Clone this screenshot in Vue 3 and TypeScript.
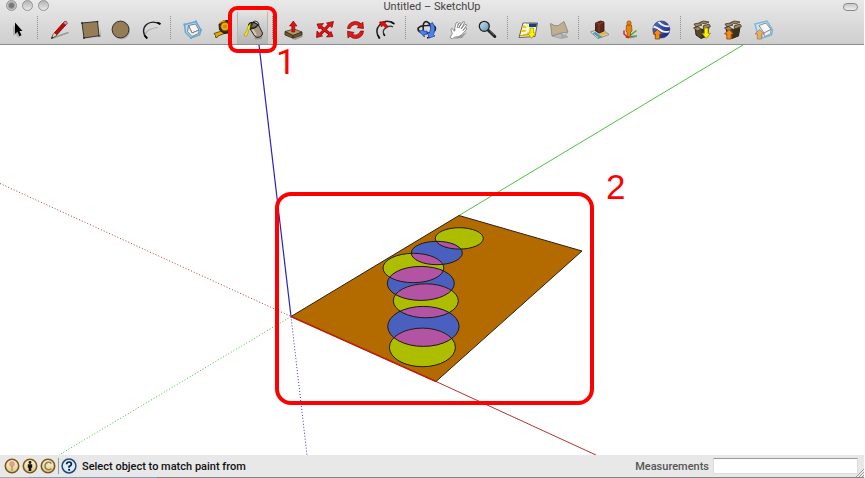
<script setup lang="ts">
import { ref } from 'vue'

interface Tool {
  id: string
  label: string
}

interface Disc {
  cx: number
  cy: number
  rx: number
  ry: number
  fill: string
}

const groups: Tool[][] = [
  [{ id: 'select', label: 'Select' }],
  [
    { id: 'line', label: 'Line' },
    { id: 'rectangle', label: 'Rectangle' },
    { id: 'circle', label: 'Circle' },
    { id: 'arc', label: 'Arc' },
  ],
  [
    { id: 'component', label: 'Make Component' },
    { id: 'tape', label: 'Tape Measure' },
    { id: 'paint', label: 'Paint Bucket' },
  ],
  [
    { id: 'pushpull', label: 'Push/Pull' },
    { id: 'move', label: 'Move' },
    { id: 'rotate', label: 'Rotate' },
    { id: 'offset', label: 'Offset' },
  ],
  [
    { id: 'orbit', label: 'Orbit' },
    { id: 'pan', label: 'Pan' },
    { id: 'zoom', label: 'Zoom' },
  ],
  [
    { id: 'view', label: 'Get Current View' },
    { id: 'terrain', label: 'Toggle Terrain' },
  ],
  [
    { id: 'place', label: 'Add New Building' },
    { id: 'person', label: 'Photo Textures' },
    { id: 'earth', label: 'Preview in Google Earth' },
  ],
  [
    { id: 'getmodels', label: 'Get Models' },
    { id: 'sharemodel', label: 'Share Model' },
    { id: 'sharecomponent', label: 'Share Component' },
  ],
]

const activeTool = ref('paint')
const measurement = ref('')

const lime = '#adbd00'
const blue = '#4a60bf'

const discs: Disc[] = [
  { cx: 459.3, cy: 238.4, rx: 24, ry: 10.7, fill: lime },
  { cx: 436.8, cy: 253, rx: 25.5, ry: 11.7, fill: blue },
  { cx: 413.4, cy: 268, rx: 30.4, ry: 14.7, fill: lime },
  { cx: 420.8, cy: 283.4, rx: 33.5, ry: 17, fill: blue },
  { cx: 425.8, cy: 300.8, rx: 32.5, ry: 17, fill: lime },
  { cx: 423.4, cy: 326.4, rx: 35.7, ry: 20, fill: blue },
  { cx: 422.4, cy: 347.4, rx: 33, ry: 19.3, fill: lime },
]
</script>

<template>
  <!-- Shared icon symbols -->
  <svg class="sprite" aria-hidden="true">
    <defs>
      <linearGradient id="g-lens" x1="0" y1="0" x2="1" y2="1">
        <stop offset="0" stop-color="#cfe6f2" />
        <stop offset="1" stop-color="#5a92b8" />
      </linearGradient>
      <linearGradient id="g-globe" x1="0" y1="0" x2="1" y2="1">
        <stop offset="0" stop-color="#5a74c8" />
        <stop offset="1" stop-color="#101c78" />
      </linearGradient>
      <linearGradient id="g-gold" x1="0" y1="0" x2="0" y2="1">
        <stop offset="0" stop-color="#fdf6d8" />
        <stop offset="1" stop-color="#dfcb88" />
      </linearGradient>

      <symbol id="i-select" viewBox="0 0 24 24">
        <path d="M7 7v11l3-2 2 4 2-1-2-4h2z" fill="#999" opacity=".6" />
        <path d="M9 4.500v11.500l2.400-2.300 2 4.600 2.100-1-2-4.300h3z" fill="#000" />
      </symbol>

      <symbol id="i-line" viewBox="0 0 24 24">
        <path d="M7 20l15.500-5.500" stroke="#999" stroke-width="1.500" fill="none" />
        <path d="M5.500 20.500l1.500-4L18.500 3.500l2.500 2L10 18z" fill="#e8d9a0" stroke="#333" stroke-width=".7" />
        <path d="M8.500 14.700L17.300 5l2.300 1.900-9 9.700z" fill="#d80000" stroke="#600" stroke-width=".7" />
        <path d="M17.300 5l1.500-1.700q2.300-.4 2.500 1.900l-1.500 1.700z" fill="#d89aac" stroke="#924" stroke-width=".7" />
        <path d="M5.200 20.800l.7-2.300 1.600 1.500z" fill="#111" />
      </symbol>

      <symbol id="i-rectangle" viewBox="0 0 24 24">
        <path d="M9 21.500l14-2.500V9l1 10z" fill="#aaa" />
        <path d="M5 5l15.500-1.500 1.500 14.300L7 20z" fill="#967d55" stroke="#333" stroke-width="1" />
        <g fill="#222"><circle cx="5" cy="5" r=".9" /><circle cx="20.500" cy="3.600" r=".9" /><circle cx="22" cy="17.800" r=".9" /><circle cx="7" cy="20" r=".9" /></g>
      </symbol>

      <symbol id="i-circle" viewBox="0 0 24 24">
        <circle cx="13.300" cy="12.500" r="8.700" fill="#aaa" />
        <circle cx="12.500" cy="11.500" r="8.400" fill="#967d55" stroke="#333" stroke-width="1" />
      </symbol>

      <symbol id="i-arc" viewBox="0 0 24 24" fill="none">
        <path d="M6 17Q7.500 10.500 19 9.500" stroke="#aaa" stroke-width="1.200" />
        <path d="M8 20.300C3.500 16.500 3.500 10 7.500 6.500Q13 2 21 6" stroke="#222" stroke-width="1.400" />
        <path d="M8.300 20.500l-2.600-3M18.500 4.500L21.500 6.200" stroke="#000" stroke-width="1.900" />
      </symbol>

      <symbol id="i-component" viewBox="0 0 24 24">
        <path d="M5.500 6.500L17 3.500l5 8.500-1.500 5-8.500 3-5.500-5.500z" fill="#bcd9ec" stroke="#62a9dd" stroke-width="1.500" />
        <path d="M9.500 7.500L16.500 6l3.500 6-7 3z" fill="#f6f6f6" stroke="#777" stroke-width=".9" />
        <path d="M13 15l7-3-.4 3.500-6.600 3-4.500-5 1-6z" fill="#eee" stroke="#777" stroke-width=".9" />
        <g fill="#62a9dd"><rect x="4.500" y="5.500" width="2" height="2" /><rect x="16" y="2.500" width="2" height="2" /><rect x="11" y="19" width="2" height="2" /><rect x="21" y="11" width="2" height="2" /></g>
      </symbol>

      <symbol id="i-tape" viewBox="0 0 24 24">
        <path d="M4 15.500l9-3 4 2-9 3.500-.8 1.500-1.800-.2.300-1.600z" fill="#e9a800" stroke="#4a3500" stroke-width=".8" />
        <path d="M9 6.500Q10 3 15 2.500h4.500l2 3v7L19 15l-5 .5L9.500 12z" fill="#2c2a26" stroke="#111" stroke-width=".8" />
        <path d="M9.500 5.500Q11 3 15.500 2.800" fill="none" stroke="#f0b000" stroke-width="1.200" />
        <circle cx="15" cy="8.500" r="4.200" fill="#f5ae00" stroke="#7a5500" stroke-width=".8" />
        <circle cx="15" cy="8.500" r="2" fill="#d8870c" />
      </symbol>

      <symbol id="i-paint" viewBox="0 0 24 24">
        <path d="M13 20l8-2 1.500-4-2 7-6 .5z" fill="#777" opacity=".6" />
        <path d="M8.800 10.500L17.500 7l4 8q.5 2.500-3 4-3 1-4.500-.5z" fill="#a89980" stroke="#222" stroke-width="1" />
        <path d="M11.500 11.500l3.500 5.500" stroke="#d6cbb5" stroke-width="2" />
        <path d="M8.800 10.800Q6 6 9.500 4.500t8 2.500q-3 4-8.700 3.800z" fill="#3c3a28" stroke="#111" stroke-width="1" />
        <path d="M12 5.500q3-.5 4 1.500-2 2-5 2z" fill="#77735a" />
        <path d="M9.500 5.500Q6 8 5.800 12.500L3 17q.5 2 2.800 1 1.700-3 1.600-5L10 8.500z" fill="#f2e21a" stroke="#8a8000" stroke-width=".5" />
        <path d="M9.500 11Q9.500 4 14 3q3.500 0 4 4" fill="none" stroke="#222" stroke-width=".9" />
      </symbol>

      <symbol id="i-pushpull" viewBox="0 0 24 24">
        <path d="M12 21l9.500-4v2L14 22z" fill="#999" />
        <path d="M4 13.500L13 11l8 3-9 3.500z" fill="#b39a6c" stroke="#443a22" stroke-width=".8" />
        <path d="M4 13.500v3.500l8 3.200v-2.700zM12 17.500v2.700l9-3.200V14z" fill="#705a32" stroke="#332811" stroke-width=".8" />
        <path d="M12.300 3l3.700 5h-2.200v6h-3V8H8.500z" fill="#e01010" stroke="#800" stroke-width=".6" />
      </symbol>

      <symbol id="i-move" viewBox="0 0 24 24">
        <path d="M7.500 8l10.500 8M18 6L7.500 17" stroke="#8a0000" stroke-width="3" />
        <g fill="#e01414" stroke="#8a0000" stroke-width=".7">
          <path d="M21.500 3.500l-1.500 6-5.500-4.500z" />
          <path d="M5 6l6.500-.5-4.500 5.500z" />
          <path d="M4.500 19.500l.5-6.500 5.500 5z" />
          <path d="M21 18.500l-6.500.5 4.500-5.500z" />
        </g>
        <path d="M8 8.300l10 7.500M17.700 6.500L7.500 16.700" stroke="#e01414" stroke-width="1.800" />
      </symbol>

      <symbol id="i-rotate" viewBox="0 0 24 24">
        <path d="M4.500 10.500Q5 4.500 12 3.500q4 0 6 2.300l1.800-1.800.7 6.500-6.300-.8 1.800-2Q12 5 8.500 8l-1.300 2.500z" fill="#dc1c1c" stroke="#8a0000" stroke-width=".7" />
        <path d="M20.500 13Q20 19.500 13 20.500q-4 0-6-2.300L5 20l-.5-6.800 6.500 1.300-1.800 1.900q4 2 7-1l1.300-2.400z" fill="#dc1c1c" stroke="#8a0000" stroke-width=".7" />
      </symbol>

      <symbol id="i-offset" viewBox="0 0 24 24" fill="none">
        <path d="M5.500 20.500Q0 12.500 6 6.500T19.500 5.500" stroke="#222" stroke-width="1.500" />
        <path d="M10.500 17.500Q7.500 13 11.500 10t7.500-1" stroke="#333" stroke-width="1.200" />
        <path d="M4 17l1.700 3.500M17 3.800l3.500 2.200M9.500 15.500l1.300 2.500" stroke="#111" stroke-width="1.600" />
        <path d="M5.500 4l6.500-.5-1 1.800 3 3-2 2-3.200-3.200L7.500 9z" fill="#e01010" stroke="#900" stroke-width=".7" />
      </symbol>

      <symbol id="i-orbit" viewBox="0 0 24 24">
        <path d="M13 7.500q8.500-1 8.500 3t-9 5Q3.500 14.500 4 10.500 5.500 7.500 13 7.500z" fill="none" stroke="#222" stroke-width="1.700" />
        <path d="M9.500 13Q8 3.500 12.500 3.500q5 2 5 9t-4.500 7.500" fill="none" stroke="#222" stroke-width="1.600" />
        <path d="M16 6l2.500-1.500q4 5.500 1 12l1.500 1.500-6 2-1.500-6 2 .8Q17.500 11 16 6z" fill="#4a82ee" stroke="#173a99" stroke-width=".7" />
        <path d="M5 13.500l4.500-2 .3 2 3.200-.5v3l-3 .5.500 2.500z" fill="#4a82ee" stroke="#173a99" stroke-width=".7" />
      </symbol>

      <symbol id="i-pan" viewBox="0 0 24 24">
        <path d="M8 21l9-4 5-3-5 6z" fill="#999" />
        <path d="M5 19.500l2.300-4-1.400-4.300q.8-1.600 2.300.2l1.100 1.900L14 5.500q1.800-1.600 2 0l-2.300 4.500L17.800 4q2-1 1.700.8L16 11l4-4.500q1.700-.8 1.600 1L17.800 12.500l2.700-2.500q1.600-.4 1.200 1.200L16.500 17q-3 2.500-7 2L7.500 21z" fill="#fff" stroke="#666" stroke-width=".7" />
        <path d="M9.300 12.500L11 5q1.500-1.600 2.300.2l-1.100 5" fill="#fff" stroke="#666" stroke-width=".7" />
      </symbol>

      <symbol id="i-zoom" viewBox="0 0 24 24">
        <path d="M12.500 12.500l6.300 6" stroke="#222" stroke-width="3" stroke-linecap="round" />
        <path d="M13.500 12.800l4.500 4.300" stroke="#777" stroke-width=".8" />
        <circle cx="8.300" cy="8.300" r="5" fill="url(#g-lens)" stroke="#222" stroke-width="1.300" />
      </symbol>

      <symbol id="i-view" viewBox="0 0 24 24">
        <path d="M7 5h14.500l-2.500 13.500L3 19.500z" fill="#fbf5c0" stroke="#555" stroke-width=".9" />
        <path d="M13 5.500h8L20.200 9H13z" fill="#173d83" />
        <path d="M7 7.500h4.500v2.500h-5zM5.500 12h5v2H5z" fill="#f2c800" />
        <path d="M4 17.500l9-1" stroke="#d9a600" stroke-width="1.500" />
        <path d="M8.500 5.500l3.500 5-1 3-6 3" stroke="#fff" stroke-width="1.300" fill="none" />
        <path d="M14 10h3.500v5H20l-4.500 5.300L11.500 15H14z" fill="#fff500" stroke="#9b9200" stroke-width=".7" />
      </symbol>

      <symbol id="i-terrain" viewBox="0 0 24 24">
        <path d="M5 18l8-3 8 4-7 1.500z" fill="#b9b9b9" stroke="#999" stroke-width=".7" />
        <path d="M3.500 5.500q5 3.500 8 2l5.500-4 4 10.500-7 1-9 3z" fill="#c0ae91" stroke="#8f877b" stroke-width=".9" />
        <path d="M14 15.500l2 4.500 5-6" fill="none" stroke="#999" stroke-width=".9" />
      </symbol>

      <symbol id="i-place" viewBox="0 0 24 24">
        <path d="M3.500 14L14 10.500l8 6-11 4z" fill="#e8e3ce" stroke="#777" stroke-width=".8" />
        <path d="M5.500 15l3-1 5.500 4-3 1z" fill="#3e9bd0" />
        <path d="M14 18l-4-3.500 7-2 3.500 3.500z" fill="#dfb75a" />
        <path d="M11 19l3-1 1.500.8-4 1.500z" fill="#43a045" />
        <path d="M8.500 5l5-2 3.500 1v9L12 15l-3.500-2z" fill="#60261c" stroke="#301008" stroke-width=".8" />
        <path d="M12 6v8.500M8.500 5l3.500 1 5-2" stroke="#8d473a" stroke-width=".8" fill="none" />
      </symbol>

      <symbol id="i-person" viewBox="0 0 24 24">
        <path d="M10 19l8.500-6.500M8 19l11-1" stroke="#3aa545" stroke-width="1.300" fill="none" />
        <path d="M12 20l6-1.500" stroke="#888" stroke-width="1.200" />
        <path d="M9.500 19L6 16V12.500" stroke="#c22" stroke-width="1.400" fill="none" />
        <path d="M8.500 7h5l.5 6-1.300 1-.5 5H9.500L9 14l-1-1z" fill="#e98211" stroke="#9e4b00" stroke-width=".8" />
        <circle cx="11" cy="5" r="2.100" fill="#e98211" stroke="#9e4b00" stroke-width=".8" />
        <path d="M8 18l4 1-1.500 1.500-3-1z" fill="#cc2a17" />
      </symbol>

      <symbol id="i-earth" viewBox="0 0 24 24">
        <circle cx="12.300" cy="11.500" r="8.500" fill="url(#g-globe)" stroke="#162468" stroke-width=".6" />
        <path d="M5 7.500Q9 9 12.500 11.500t8 1l-.3 1.800Q14 16 10 12.500T4 10zM8.500 4.200q3 3.300 6 4.300t6 .5l-.5-1.500Q15 8 10.500 3.500z" fill="#edf3ff" />
        <path d="M8.500 11.500L13 16h-2.300v5H6.300v-5H4z" fill="#f18a18" stroke="#874400" stroke-width=".8" />
      </symbol>

      <symbol id="i-carton" viewBox="0 0 24 24">
        <path d="M6 9l7 2.500L20 9l-1.500 9L12 20.500 7 17z" fill="#59472f" stroke="#29200f" stroke-width=".9" />
        <path d="M12.500 11.500v9l6-2.500L20 9z" fill="#393020" />
        <path d="M5 6l5-1 3 2-6 2zM10.500 4.500l4-1.500 5.500 1-4 2zM14 8l6-2 1.500 2.500L15 11zM4.500 10l4-1.500 4 2.500-4 2z" fill="#9d8866" stroke="#44351f" stroke-width=".8" />
      </symbol>

      <symbol id="i-getmodels" viewBox="0 0 24 24">
        <use href="#i-carton" width="24" height="24" />
        <path d="M15.300 10h3.800v5.300h2.400l-4.300 5.200-4.200-5.200h2.300z" fill="#fff300" stroke="#968b00" stroke-width=".8" />
      </symbol>

      <symbol id="i-sharemodel" viewBox="0 0 24 24">
        <use href="#i-carton" width="24" height="24" />
        <path d="M9 11.500l4.500 4.500h-2.300v5H6.800v-5H4.500z" fill="#f58c16" stroke="#894400" stroke-width=".8" />
      </symbol>

      <symbol id="i-sharecomponent" viewBox="0 0 24 24">
        <path d="M4 6l12-3 5.500 9-1 5-8.500 3-6-6z" fill="#cfe3f0" stroke="#79b9e3" stroke-width="1.500" />
        <path d="M8 7.500l7-2.500 5 6.500-7 3.500z" fill="#f9f9f9" stroke="#777" stroke-width=".8" />
        <path d="M13 15l7-3.500-.5 4.500-6 2.500z" fill="#eee" stroke="#888" stroke-width=".8" />
        <path d="M8.500 11.500L13 16h-2.300v5H6.300v-5H4z" fill="#e5ad69" stroke="#a4733b" stroke-width=".7" />
      </symbol>
    </defs>
  </svg>

  <div class="window">
    <header class="chrome">
      <div class="titlebar">
        <div class="lights">
          <button class="light close" type="button" aria-label="Close"></button>
          <button class="light" type="button" aria-label="Minimize"></button>
          <button class="light" type="button" aria-label="Zoom window"></button>
        </div>
        <h1 class="title">Untitled – SketchUp</h1>
        <button class="pill" type="button" aria-label="Toggle toolbar"></button>
      </div>
      <nav class="toolbar" aria-label="Tools">
        <div v-for="(group, g) in groups" :key="g" class="group">
          <div v-for="tool in group" :key="tool.id" class="slot">
            <button
              type="button"
              class="tool"
              :class="{ active: tool.id === activeTool }"
              :aria-label="tool.label"
              :aria-pressed="tool.id === activeTool"
              @click="activeTool = tool.id"
            >
              <svg class="icon" aria-hidden="true"><use :href="'#i-' + tool.id" /></svg>
            </button>
            <div v-if="tool.id === 'paint'" class="callout">
              <span class="callout-number">1</span>
            </div>
          </div>
        </div>
      </nav>
    </header>

    <main class="viewport">
      <svg class="scene" viewBox="0 45 864 410" preserveAspectRatio="xMidYMid slice" role="img" aria-label="Model">
        <defs>
          <clipPath v-for="(d, i) in discs" :id="'disc-' + i" :key="i">
            <ellipse :cx="d.cx" :cy="d.cy" :rx="d.rx" :ry="d.ry" />
          </clipPath>
        </defs>

        <g fill="none" stroke-width="1">
          <path d="M0 183.500L291 316.500" stroke="#b83c3c" stroke-dasharray="1 2" />
          <path d="M291 316.500L59 455" stroke="#46c034" stroke-dasharray="1 2" />
          <path d="M291 316.500L307 455" stroke="#3434d0" stroke-dasharray="1 2" />
          <path d="M459 215.500L743 45" stroke="#4cc43c" />
          <path d="M259 45L291 316.500" stroke="#2b20c4" stroke-width="1.200" />
          <path d="M436 381.500L596 455" stroke="#b43232" />
        </g>

        <path d="M291 316.500L459 215.500 582 251 436 381.500z" fill="#b36b00" stroke="#2a2015" stroke-width="1" />
        <path d="M291 316.500L436 381.500" stroke="#c02010" stroke-width="1.400" />

        <ellipse v-for="(d, i) in discs" :key="'f' + i" :cx="d.cx" :cy="d.cy" :rx="d.rx" :ry="d.ry" :fill="d.fill" />
        <ellipse
          v-for="(d, i) in discs.slice(1)"
          :key="'o' + i"
          :cx="d.cx"
          :cy="d.cy"
          :rx="d.rx"
          :ry="d.ry"
          fill="#b253a4"
          :clip-path="'url(#disc-' + i + ')'"
        />
        <ellipse
          v-for="(d, i) in discs"
          :key="'s' + i"
          :cx="d.cx"
          :cy="d.cy"
          :rx="d.rx"
          :ry="d.ry"
          fill="none"
          stroke="#1c1a14"
          stroke-width="1"
        />

        <rect x="277" y="194" width="315" height="209" rx="14" fill="none" stroke="#ff0000" stroke-width="4" />
        <text class="scene-number" x="606" y="199">2</text>
      </svg>
    </main>

    <footer class="status">
      <div class="badges">
        <button class="badge" type="button" aria-label="Geo-location">
          <svg viewBox="0 0 16 16" aria-hidden="true">
            <circle cx="8" cy="8" r="6.700" fill="url(#g-gold)" stroke="#7d5716" stroke-width="1.600" />
            <path d="M8 8v5" stroke="#998c70" stroke-width="1.200" />
            <circle cx="8" cy="6" r="2.400" fill="#e9a08c" stroke="#d08070" stroke-width=".6" />
          </svg>
        </button>
        <button class="badge" type="button" aria-label="Model credits">
          <svg viewBox="0 0 16 16" aria-hidden="true">
            <circle cx="8" cy="8" r="6.700" fill="url(#g-gold)" stroke="#7d5716" stroke-width="1.600" />
            <circle cx="8" cy="4.500" r="1.400" fill="#111" />
            <path d="M5.800 6.300h4.400v3.500H9.300V13H6.700V9.800h-.9z" fill="#111" />
          </svg>
        </button>
        <button class="badge" type="button" aria-label="Sign in">
          <svg viewBox="0 0 16 16" aria-hidden="true">
            <circle cx="8" cy="8" r="6.700" fill="url(#g-gold)" stroke="#7d5716" stroke-width="1.600" />
            <path d="M11.500 5.500Q10 4 8 4.300 5 5 5 8t3 3.700q2 .3 3.500-1.200" fill="none" stroke="#8d8162" stroke-width="1.500" />
          </svg>
        </button>
      </div>
      <button class="badge help" type="button" aria-label="Help">
        <svg viewBox="0 0 16 16" aria-hidden="true">
          <circle cx="8" cy="8" r="6.900" fill="#dcecf8" stroke="#234a7c" stroke-width="1.500" />
          <path d="M5.700 6.200Q5.800 4 8.100 4t2.300 2.200Q10.300 7.500 8.100 8.500v1.300" fill="none" stroke="#0b1b35" stroke-width="1.700" />
          <rect x="7.200" y="10.900" width="1.900" height="1.800" fill="#0b1b35" />
        </svg>
      </button>
      <p class="hint">Select object to match paint from</p>
      <label class="measure-label" for="measurements">Measurements</label>
      <input id="measurements" v-model="measurement" class="measure" type="text" />
      <svg class="grip" viewBox="0 0 8 8" aria-hidden="true">
        <path d="M0 8l8-8M3 8l5-5M6 8l2-2" stroke="#888" stroke-width=".8" />
      </svg>
    </footer>
    <div class="desktop-edge"></div>
  </div>
</template>

<style>
body {
  margin: 0;
  background: #fff;
}
</style>

<style scoped>
.sprite {
  position: absolute;
  width: 0;
  height: 0;
}

.window {
  display: flex;
  flex-direction: column;
  height: 100vh;
  margin-right: 1px;
  font-family: Roboto, 'Open Sans', sans-serif;
  font-size: 11px;
  color: #111;
}

button {
  padding: 0;
  border: 0;
  background: none;
}

.chrome {
  flex: none;
  background: linear-gradient(#e9e9e9, #cecece);
  border-bottom: 1px solid #8c8c8c;
}

.titlebar {
  display: grid;
  grid-template-columns: 1fr auto 1fr;
  align-items: start;
  height: 12px;
  padding: 0 6px;
}

.lights {
  display: flex;
  gap: 5px;
}

.light {
  width: 11px;
  height: 11px;
  border: 1px solid #959595;
  border-radius: 50%;
  background: linear-gradient(#b4b4b4, #e8e8e8);
}

.close {
  background: radial-gradient(circle, #777 2px, #c4c4c4 4px);
}

.title {
  margin: 0;
  font-size: 11px;
  font-weight: 400;
  line-height: 13px;
  color: #444;
}

.pill {
  justify-self: end;
  align-self: center;
  width: 15px;
  height: 8px;
  border: 1px solid #888;
  border-radius: 4px;
  background: linear-gradient(#c8c8c8, #eee);
}

.toolbar {
  display: flex;
  height: 32px;
  padding-left: 2px;
}

.group {
  display: flex;
  align-items: center;
}

.group + .group::before {
  content: '';
  width: 1px;
  height: 24px;
  margin: 0 4px;
  background: repeating-linear-gradient(#8f8f8f 0 1px, transparent 1px 2px);
}

.slot {
  position: relative;
  width: 31px;
  height: 32px;
}

.tool {
  display: flex;
  align-items: center;
  justify-content: center;
  width: 31px;
  height: 32px;
  padding-top: 4px;
}

.tool.active {
  background: linear-gradient(rgb(0 0 0 / 0%), rgb(0 0 0 / 12%));
  box-shadow: inset 1px 0 #b4b4b4, inset -1px 0 #b4b4b4;
}

.icon {
  flex: none;
  width: 24px;
  height: 24px;
}

.callout {
  position: absolute;
  z-index: 1;
  top: -6px;
  left: -9px;
  box-sizing: border-box;
  width: 49px;
  height: 47px;
  border: 4px solid #f00;
  border-radius: 9px;
  pointer-events: none;
}

.callout-number {
  position: absolute;
  top: 33px;
  left: 44px;
  font: 35px/40px Roboto, 'Liberation Sans', sans-serif;
  color: #f00;
}

.viewport {
  flex: 1;
  min-height: 0;
}

.scene {
  display: block;
  width: 100%;
  height: 100%;
}

.scene-number {
  font: 35px 'Liberation Sans', sans-serif;
  fill: #f00;
}

.status {
  display: flex;
  flex: none;
  align-items: center;
  height: 22px;
  padding-left: 4px;
  background: #e8e8e8;
}

.badges {
  display: flex;
  gap: 2px;
  padding-right: 2px;
  border-right: 1px solid #999;
}

.badge {
  width: 16px;
  height: 16px;
}

.badge svg {
  display: block;
}

.help {
  margin-left: 2px;
}

.hint {
  flex: 1;
  margin: 0 0 0 5px;
  font-weight: 500;
}

.measure-label {
  margin-right: 4px;
  font-weight: 500;
  color: #555;
}

.measure {
  box-sizing: border-box;
  width: 145px;
  height: 16px;
  padding: 0 3px;
  border: 1px solid #ddd;
  border-top-color: #999;
  background: #fff;
  font: inherit;
}

.grip {
  align-self: flex-end;
  width: 8px;
  height: 8px;
  margin-left: -2px;
}

.desktop-edge {
  flex: none;
  height: 1px;
  background: linear-gradient(90deg, #aaa 0 28px, #7d9fb4 28px 157px, #858585 157px);
}
</style>
